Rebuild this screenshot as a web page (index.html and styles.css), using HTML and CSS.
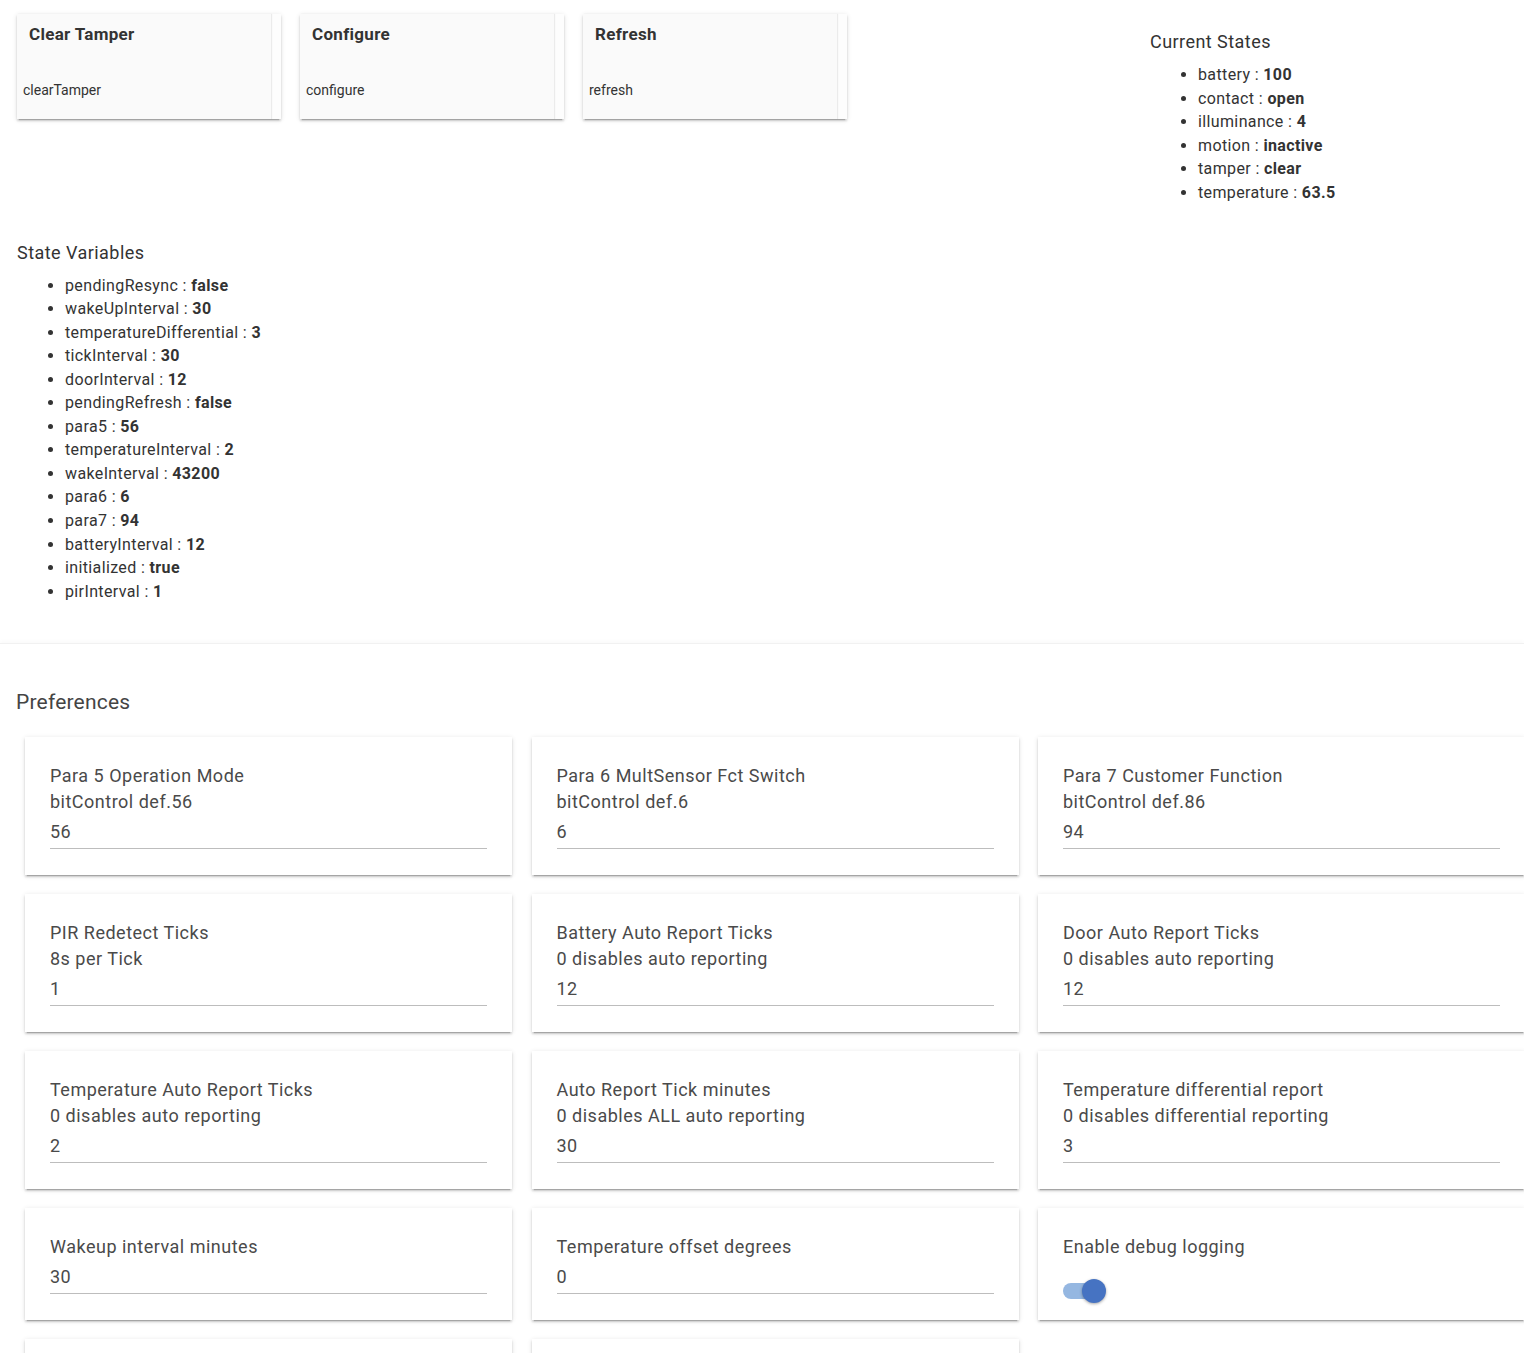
FILE: index.html
```html
<!DOCTYPE html>
<html>
<head>
<meta charset="utf-8">
<link rel="stylesheet" href="styles.css">
</head>
<body>
<div class="top">
  <div class="commands">
    <div class="cmd"><div class="cmd-body"><div class="cmd-title">Clear Tamper</div><div class="cmd-sub">clearTamper</div></div></div>
    <div class="cmd"><div class="cmd-body"><div class="cmd-title">Configure</div><div class="cmd-sub">configure</div></div></div>
    <div class="cmd"><div class="cmd-body"><div class="cmd-title">Refresh</div><div class="cmd-sub">refresh</div></div></div>
  </div>
  <div class="states">
    <div class="block-title">Current States</div>
    <ul class="kv">
      <li>battery : <b>100</b></li>
      <li>contact : <b>open</b></li>
      <li>illuminance : <b>4</b></li>
      <li>motion : <b>inactive</b></li>
      <li>tamper : <b>clear</b></li>
      <li>temperature : <b>63.5</b></li>
    </ul>
  </div>
</div>
<div class="statevars">
  <div class="block-title">State Variables</div>
  <ul class="kv">
    <li>pendingResync : <b>false</b></li>
    <li>wakeUpInterval : <b>30</b></li>
    <li>temperatureDifferential : <b>3</b></li>
    <li>tickInterval : <b>30</b></li>
    <li>doorInterval : <b>12</b></li>
    <li>pendingRefresh : <b>false</b></li>
    <li>para5 : <b>56</b></li>
    <li>temperatureInterval : <b>2</b></li>
    <li>wakeInterval : <b>43200</b></li>
    <li>para6 : <b>6</b></li>
    <li>para7 : <b>94</b></li>
    <li>batteryInterval : <b>12</b></li>
    <li>initialized : <b>true</b></li>
    <li>pirInterval : <b>1</b></li>
  </ul>
</div>
<div class="prefs">
  <div class="prefs-title">Preferences</div>
  <div class="pref-grid">
    <div class="pref"><div class="pl">Para 5 Operation Mode</div><div class="pl">bitControl def.56</div><div class="val">56</div></div>
    <div class="pref"><div class="pl">Para 6 MultSensor Fct Switch</div><div class="pl">bitControl def.6</div><div class="val">6</div></div>
    <div class="pref"><div class="pl">Para 7 Customer Function</div><div class="pl">bitControl def.86</div><div class="val">94</div></div>
    <div class="pref"><div class="pl">PIR Redetect Ticks</div><div class="pl">8s per Tick</div><div class="val">1</div></div>
    <div class="pref"><div class="pl">Battery Auto Report Ticks</div><div class="pl">0 disables auto reporting</div><div class="val">12</div></div>
    <div class="pref"><div class="pl">Door Auto Report Ticks</div><div class="pl">0 disables auto reporting</div><div class="val">12</div></div>
    <div class="pref"><div class="pl">Temperature Auto Report Ticks</div><div class="pl">0 disables auto reporting</div><div class="val">2</div></div>
    <div class="pref"><div class="pl">Auto Report Tick minutes</div><div class="pl">0 disables ALL auto reporting</div><div class="val">30</div></div>
    <div class="pref"><div class="pl">Temperature differential report</div><div class="pl">0 disables differential reporting</div><div class="val">3</div></div>
    <div class="pref"><div class="pl">Wakeup interval minutes</div><div class="val">30</div></div>
    <div class="pref"><div class="pl">Temperature offset degrees</div><div class="val">0</div></div>
    <div class="pref"><div class="pl">Enable debug logging</div><div class="toggle"><span class="track"></span><span class="knob"></span></div></div>
    <div class="pref"><div class="pl">Enable descriptionText logging</div><div class="toggle"><span class="track"></span><span class="knob"></span></div></div>
    <div class="pref"><div class="pl">Illuminance offset</div><div class="val">0</div></div>
  </div>
</div>
</body>
</html>
```
FILE: styles.css
```css
html, body {
  margin: 0;
  padding: 0;
  background: #ffffff;
  overflow-x: hidden;
}
body {
  font-family: Roboto, "Liberation Sans", Arial, sans-serif;
  color: #333333;
}
.top {
  display: flex;
  padding-top: 14px;
}
.commands {
  flex: 0 0 1150px;
  box-sizing: border-box;
  padding-left: 17px;
  display: flex;
  align-items: flex-start;
  gap: 19px;
}
.cmd {
  width: 264px;
  height: 105px;
  background: #fdfdfd;
  box-shadow: 0 2px 2px rgba(0,0,0,0.14), 0 3px 1px -2px rgba(0,0,0,0.2), 0 1px 5px rgba(0,0,0,0.12);
  display: flex;
}
.cmd-body {
  width: 254px;
  height: 100%;
  background: #fafafa;
  box-shadow: 1px 0 1px rgba(0,0,0,0.07);
}
.cmd-title {
  font-weight: 700;
  font-size: 17px;
  line-height: 20px;
  letter-spacing: 0.3px;
  padding: 10px 0 0 12px;
  color: #333;
}
.cmd-sub {
  font-size: 14px;
  line-height: 18px;
  margin-top: 37px;
  padding-left: 6px;
  color: #333;
}
.states {
  margin-top: 16px;
}
.block-title {
  font-size: 18px;
  line-height: 24px;
  letter-spacing: 0.45px;
  color: #333;
}
.kv {
  margin: 9px 0 0 8px;
  padding-left: 40px;
  font-size: 16px;
  line-height: 23.6px;
  letter-spacing: 0.37px;
  color: #333;
}
.kv b {
  font-weight: 700;
}
.statevars {
  margin-top: 36px;
  padding-left: 17px;
}
.statevars .kv {
  line-height: 23.55px;
}
.prefs {
  margin-top: 40px;
  border-top: 1px solid #f1f1f1;
  box-shadow: 0 -2px 4px rgba(0,0,0,0.025);
  padding-top: 44px;
}
.prefs-title {
  font-size: 21px;
  line-height: 28px;
  letter-spacing: 0.2px;
  color: #444;
  padding-left: 16px;
}
.pref-grid {
  margin-top: 21px;
  padding-left: 25px;
  display: grid;
  grid-template-columns: repeat(3, 487px);
  column-gap: 19.5px;
  row-gap: 19px;
  padding-bottom: 40px;
}
.pref {
  background: #fff;
  padding: 26px 25px 26px 25px;
  box-shadow: 0 2px 2px rgba(0,0,0,0.14), 0 3px 1px -2px rgba(0,0,0,0.2), 0 1px 5px rgba(0,0,0,0.12);
  color: #4a4a4a;
}
.pl {
  font-size: 18px;
  line-height: 26px;
  letter-spacing: 0.5px;
}
.val {
  font-size: 18px;
  line-height: 26px;
  letter-spacing: 0.5px;
  margin-top: 4px;
  padding-bottom: 3px;
  border-bottom: 1px solid #bdbdbd;
}
.toggle {
  position: relative;
  width: 44px;
  height: 16px;
  margin-top: 23px;
  margin-bottom: -6px;
}
.track {
  position: absolute;
  left: 0;
  top: 0;
  width: 38px;
  height: 16px;
  border-radius: 8px;
  background: #95b7e1;
}
.knob {
  position: absolute;
  left: 19px;
  top: -4px;
  width: 24px;
  height: 24px;
  border-radius: 50%;
  background: #4673c2;
  box-shadow: 0 1px 3px rgba(0,0,0,0.35);
}
```
